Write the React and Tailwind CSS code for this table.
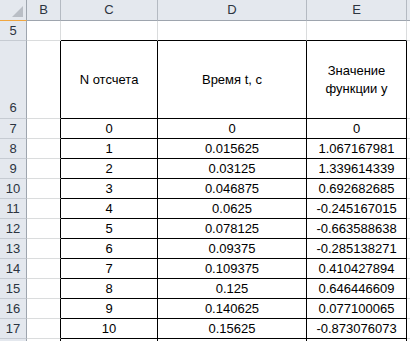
import React from "react";

const rows = [
  ["0", "0", "0"],
  ["1", "0.015625", "1.067167981"],
  ["2", "0.03125", "1.339614339"],
  ["3", "0.046875", "0.692682685"],
  ["4", "0.0625", "-0.245167015"],
  ["5", "0.078125", "-0.663588638"],
  ["6", "0.09375", "-0.285138271"],
  ["7", "0.109375", "0.410427894"],
  ["8", "0.125", "0.646446609"],
  ["9", "0.140625", "0.077100065"],
  ["10", "0.15625", "-0.873076073"],
];

const font = { fontFamily: '"Liberation Sans", Arial, sans-serif' };

function RowHead({ n, h = "h-[20px]", align = "items-center" }) {
  return (
    <div
      className={`${h} flex ${align} justify-center bg-[#e4e8ee] border-r border-b border-r-[#9ea5ae] border-b-[#c6cbd2] text-[13px] text-[#2c3440]`}
    >
      {n}
    </div>
  );
}

function ColHead({ label }) {
  return (
    <div className="h-[21px] flex items-center justify-center bg-[#e4e8ee] border-r border-b border-r-[#b4bac2] border-b-[#9ea5ae] text-[13px] text-[#2c3440]">
      {label}
    </div>
  );
}

export default function App() {
  return (
    <div className="w-[410px] h-[341px] overflow-hidden bg-white" style={font}>
      <div className="grid grid-cols-[27px_34px_97px_149px_100px_1fr]">
        {/* column header strip */}
        <div className="h-[21px] relative bg-[#e4e8ee] border-r border-b border-r-[#9ea5ae] border-b-[#f0a640]">
          <svg className="absolute right-[3px] bottom-[3px]" width="11" height="11" viewBox="0 0 11 11">
            <polygon points="11,0 11,11 0,11" fill="#b9bec5" />
          </svg>
        </div>
        <ColHead label="B" />
        <ColHead label="C" />
        <ColHead label="D" />
        <ColHead label="E" />
        <div className="h-[21px] bg-[#e4e8ee] border-b border-b-[#9ea5ae]" />

        {/* row 5 */}
        <RowHead n="5" />
        <div className="h-[20px] border-r border-b border-[#dadcdd]" />
        <div className="h-[20px] border-r border-b border-r-[#dadcdd] border-b-black" />
        <div className="h-[20px] border-r border-b border-r-[#dadcdd] border-b-black" />
        <div className="h-[20px] border-r border-b border-r-[#dadcdd] border-b-black" />
        <div className="h-[20px] border-b border-[#dadcdd]" />

        {/* row 6: table heading */}
        <RowHead n="6" h="h-[78px]" align="items-end pb-[1px]" />
        <div className="h-[78px] border-r border-b border-r-black border-b-[#dadcdd]" />
        <div className="h-[78px] flex items-center justify-center border-r border-b border-black text-[13px] text-black">
          N отсчета
        </div>
        <div className="h-[78px] flex items-center justify-center border-r border-b border-black text-[13px] text-black">
          Время t, с
        </div>
        <div className="h-[78px] flex items-center justify-center border-r border-b border-black text-[13px] leading-[18px] text-black text-center">
          Значение
          <br />
          функции y
        </div>
        <div className="h-[78px] border-b border-[#dadcdd]" />

        {/* data rows */}
        {rows.map((r, i) => (
          <React.Fragment key={i}>
            <RowHead n={String(7 + i)} />
            <div className="h-[20px] border-r border-b border-r-black border-b-[#dadcdd]" />
            {r.map((v, j) => (
              <div
                key={j}
                className="h-[20px] flex items-center justify-center border-r border-b border-black text-[13px] text-black"
              >
                {v}
              </div>
            ))}
            <div className="h-[20px] border-b border-[#dadcdd]" />
          </React.Fragment>
        ))}

        {/* next row, only its top edge is in view */}
        <RowHead n="" />
        <div className="h-[20px] border-r border-b border-r-black border-b-[#dadcdd]" />
        <div className="h-[20px] border-r border-black" />
        <div className="h-[20px] border-r border-black" />
        <div className="h-[20px] border-r border-black" />
        <div className="h-[20px]" />
      </div>
    </div>
  );
}
